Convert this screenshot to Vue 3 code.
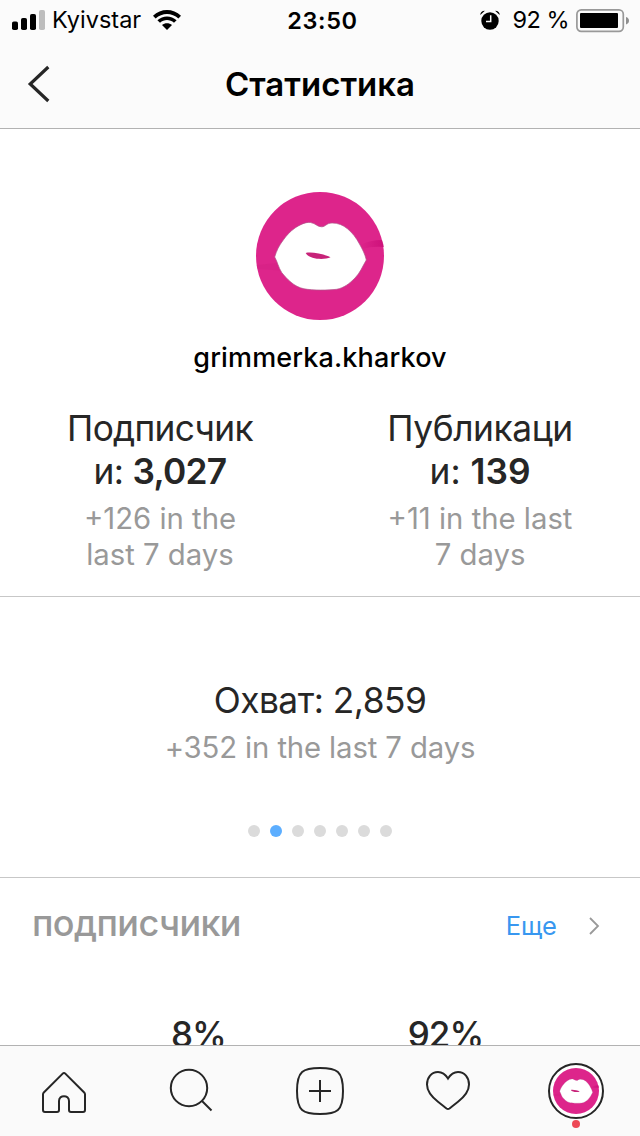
<template>
  <div class="screen">
    <header class="top">
      <div class="status-bar">
        <div class="status-left">
          <svg class="signal" width="34" height="20" viewBox="0 0 34 20">
            <rect x="0" y="11.5" width="6" height="8.5" rx="1.8" />
            <rect x="9" y="8" width="6" height="12" rx="1.8" />
            <rect x="18" y="4" width="6" height="16" rx="1.8" />
            <rect x="27" y="0" width="6" height="20" rx="1.8" fill="#bdbdbd" />
          </svg>
          <span class="carrier">Kyivstar</span>
          <svg class="wifi" width="28" height="20" viewBox="0 0 28 20">
            <path d="M0 5.7C7.8-1.9 20.2-1.9 28 5.7L25.4 8.4C19 2.4 9 2.4 2.6 8.4Z" />
            <path d="M4.4 10.2C9.8 5.1 18.2 5.1 23.6 10.2L21 12.8C17 9.2 11 9.2 7 12.8Z" />
            <path d="M9 15.1C11.8 12.5 16.2 12.5 19 15.1L14 20Z" />
          </svg>
        </div>
        <span class="clock">23:50</span>
        <div class="status-right">
          <svg class="alarm" width="20" height="20" viewBox="0 0 20 20">
            <circle cx="10" cy="11" r="8.7" />
            <path d="M0.3 4.9Q0.3 0.9 4.9 0.7ZM19.7 4.9Q19.7 0.9 15.1 0.7Z" />
            <path d="M10.7 5.2V11.6H6" fill="none" stroke="#fafafa" stroke-width="1.5" />
          </svg>
          <span class="charge">92 %</span>
          <svg class="battery" width="54" height="24" viewBox="0 0 54 24">
            <rect x="0.9" y="0.9" width="46.4" height="21.4" rx="4.3" fill="none" stroke="#999" stroke-width="1.7" />
            <rect x="4" y="4" width="38" height="15" rx="1" />
            <path d="M50 8Q53 9 53 11.7Q53 14.4 50 15.4Z" fill="#8f8f8f" />
          </svg>
        </div>
      </div>
      <div class="nav-bar">
        <svg class="back" width="24" height="38" viewBox="0 0 24 38">
          <path d="M21.3 2L3.2 19L21.3 36" fill="none" stroke="#262626" stroke-width="3.2" />
        </svg>
        <h1 class="title">Статистика</h1>
      </div>
    </header>

    <main class="content">
      <section class="profile">
        <svg class="avatar" viewBox="0 0 128 128">
          <defs>
            <linearGradient id="fold">
              <stop offset="0" stop-color="#c90c76" stop-opacity="0" />
              <stop offset="1" stop-color="#c90c76" stop-opacity=".8" />
            </linearGradient>
            <symbol id="lips" viewBox="0 0 128 128">
              <circle cx="64" cy="64" r="64" fill="#dd258b" />
              <path d="M104 53Q114 48 126 48Q127.500 52 127.800 55Q116 54 106 57Z" fill="url(#fold)" />
              <path d="M0.300 73L31 70L32 79L1.600 77Z" fill="#c81879" opacity=".2" />
              <path
                d="M18.700 65C20.500 59 23 53.500 27.300 48C30.500 43.500 34 39.500 39 36C44 32.500 50 29.800 54.500 30.500C60 31.500 61 34.800 65.700 34.800C69.500 34.800 70.500 31 76 31C82 31 87 33 91.500 36.800C96.500 41 100 45.500 103.500 52C106.500 57.500 109 62 110.300 68C106.500 74.500 104 81 99 86C93.500 91.500 88 96 80.500 97.300C72 98.300 57 98.500 48 96.800C38 94.800 31 87 25.700 80.500C22.500 75.500 21.500 70 18.700 65Z"
                fill="#fff" stroke="#b0558a" stroke-width=".7"
              />
              <path d="M49.700 61C55 59.500 68 62 74.500 65.300C67 68.500 53 67 49.700 61Z" fill="#c72379" />
            </symbol>
          </defs>
          <use href="#lips" />
        </svg>
        <div class="username">grimmerka.kharkov</div>
        <div class="stats">
          <div v-for="stat in stats" :key="stat.key" class="stat" :class="stat.key">
            <div class="stat-line stat-label">{{ stat.head }}</div>
            <div class="stat-line">{{ stat.tail }} <b>{{ stat.value }}</b></div>
            <div class="stat-change">
              <div v-for="line in stat.change" :key="line">{{ line }}</div>
            </div>
          </div>
        </div>
      </section>

      <section class="reach">
        <div class="reach-total">Охват: 2,859</div>
        <div class="reach-change">+352 in the last 7 days</div>
        <div class="dots">
          <span v-for="n in 7" :key="n" class="dot" :class="{ active: n === activeSlide }"></span>
        </div>
      </section>

      <section class="followers">
        <div class="section-head">
          <h2 class="section-title">подписчики</h2>
          <a class="more">
            <span>Еще</span>
            <svg width="12" height="20" viewBox="0 0 12 20">
              <path d="M2 2L10 10L2 18" fill="none" stroke="#999" stroke-width="1.8" />
            </svg>
          </a>
        </div>
        <div class="shares">
          <span v-for="share in shares" :key="share">{{ share }}%</span>
        </div>
      </section>
    </main>

    <nav class="tab-bar">
      <div class="tab">
        <svg width="48" height="48" viewBox="0 0 48 48">
          <path d="M24 6Q24.700 6 25.300 6.600L44.200 25.500Q45 26.300 45 27.500V43Q45 45 43 45H31Q29 45 29 43V34C29 27.500 19 27.500 19 34V43Q19 45 17 45H5Q3 45 3 43V27.500Q3 26.300 3.800 25.500L22.700 6.600Q23.300 6 24 6Z" />
        </svg>
      </div>
      <div class="tab">
        <svg width="48" height="48" viewBox="0 0 48 48">
          <circle cx="21" cy="21" r="18.200" />
          <path d="M34 34L43.500 43.500" />
        </svg>
      </div>
      <div class="tab">
        <svg width="48" height="48" viewBox="0 0 48 48">
          <path d="M24 1C41 1 47 4 47 24C47 44 41 47 24 47C7 47 1 44 1 24C1 4 7 1 24 1Z" />
          <path d="M24 13V35M13 24H35" />
        </svg>
      </div>
      <div class="tab">
        <svg width="48" height="48" viewBox="0 0 48 48">
          <path d="M24 11.500C21.500 7.500 18 5 14 5C7.500 5 3 10.500 3 17.500C3 25 8 30 14 34.800C18 38 20.500 40 22.500 41.500Q24 42.500 25.500 41.500C27.500 40 30 38 34 34.800C40 30 45 25 45 17.500C45 10.500 40.500 5 34 5C30 5 26.500 7.500 24 11.500Z" />
        </svg>
      </div>
      <div class="tab tab-profile">
        <span class="ring">
          <svg class="mini-avatar" viewBox="0 0 128 128"><use href="#lips" /></svg>
        </span>
        <span class="badge"></span>
      </div>
    </nav>
  </div>
</template>

<script setup>
import { ref } from 'vue'

const activeSlide = ref(2)

const stats = [
  { key: 'subscribers', head: 'Подписчик', tail: 'и:', value: '3,027', change: ['+126 in the', 'last 7 days'] },
  { key: 'posts', head: 'Публикаци', tail: 'и:', value: '139', change: ['+11 in the last', '7 days'] }
]

const shares = [8, 92]
</script>

<style>
body {
  margin: 0;
  background: #fff;
}
</style>

<style scoped>
.screen {
  display: flex;
  flex-direction: column;
  width: 640px;
  height: 1136px;
  overflow: hidden;
  background: #fff;
  color: #262626;
  font-family: Inter, Roboto, sans-serif;
}

svg {
  display: block;
  flex: none;
}

h1,
h2 {
  margin: 0;
}

.top {
  flex: none;
  height: 128px;
  background: #fbfbfb;
  border-bottom: 1px solid #b2b2b2;
}

.status-bar {
  display: grid;
  grid-template-columns: 1fr auto 1fr;
  height: 40px;
  padding: 0 10px 0 12px;
  line-height: 42px;
  font-size: 23.5px;
  color: #000;
}

.status-left,
.status-right {
  display: flex;
  align-items: center;
  height: 40px;
}

.status-right {
  justify-content: flex-end;
}

.carrier {
  margin: 0 12px 0 6px;
}

.clock {
  padding-left: 3px;
  font-weight: 600;
  letter-spacing: 0.6px;
}

.charge {
  margin: 0 7px 0 12px;
  letter-spacing: -0.5px;
}

.battery {
  margin-top: 1px;
}

.nav-bar {
  display: grid;
  grid-template-columns: 60px 1fr 60px;
  align-items: center;
  height: 88px;
}

.back {
  margin-left: 27px;
}

.title {
  font-size: 33px;
  line-height: 44px;
  font-weight: 600;
  text-align: center;
  color: #000;
}

.content {
  flex: 1;
  min-height: 0;
  overflow: hidden;
}

.profile {
  height: 467px;
  padding-top: 63px;
  box-sizing: border-box;
  text-align: center;
}

.avatar {
  width: 128px;
  height: 128px;
  margin: 0 auto;
}

.username {
  margin-top: 21px;
  font-size: 27px;
  line-height: 34px;
  font-weight: 500;
  letter-spacing: 0.15px;
  color: #000;
}

.stats {
  display: grid;
  grid-template-columns: 1fr 1fr;
  margin-top: 32px;
}

.stat-line {
  font-size: 35.3px;
  line-height: 43px;
  white-space: nowrap;
}

.stat-line b {
  font-weight: 600;
}

.subscribers .stat-line {
  letter-spacing: -0.7px;
}

.posts .stat-label {
  letter-spacing: -0.4px;
}

.stat-change,
.reach-change {
  font-size: 29.3px;
  line-height: 36px;
  color: #999;
}

.stat-change {
  margin-top: 8px;
}

.reach {
  height: 282px;
  padding-top: 82px;
  box-sizing: border-box;
  border-top: 1px solid #c7c7c7;
  border-bottom: 1px solid #c7c7c7;
  text-align: center;
}

.reach-total {
  font-size: 35.3px;
  line-height: 44px;
  letter-spacing: -0.5px;
}

.reach-change {
  margin-top: 7px;
  letter-spacing: -0.12px;
}

.dots {
  display: flex;
  justify-content: center;
  gap: 10px;
  margin-top: 59px;
}

.dot {
  width: 12px;
  height: 12px;
  border-radius: 50%;
  background: #dbdbdb;
}

.dot.active {
  background: #5caeff;
}

.section-head {
  display: flex;
  align-items: flex-start;
  justify-content: space-between;
  height: 44px;
  padding: 24px 40px 0 32px;
}

.section-title {
  font-size: 36px;
  line-height: 43px;
  font-weight: 500;
  letter-spacing: -0.6px;
  color: #999;
}

.more {
  display: flex;
  align-items: center;
  gap: 31px;
  font-size: 25.5px;
  line-height: 48px;
  color: #3897f0;
}

.shares {
  display: grid;
  grid-template-columns: 247px 247px;
  margin: 66px 0 0 75px;
  font-size: 35px;
  line-height: 44px;
  font-weight: 500;
  letter-spacing: -1px;
  text-align: center;
}

.tab-bar {
  display: grid;
  grid-template-columns: repeat(5, 1fr);
  flex: none;
  height: 90px;
  background: #fafafa;
  border-top: 1px solid #b2b2b2;
}

.tab {
  display: flex;
  align-items: center;
  justify-content: center;
}

.tab > svg {
  fill: none;
  stroke: #262626;
  stroke-width: 2;
}

.tab-profile {
  position: relative;
}

.ring {
  padding: 3px;
  border: 2px solid #262626;
  border-radius: 50%;
  background: #fff;
}

.mini-avatar {
  width: 46px;
  height: 46px;
}

.badge {
  position: absolute;
  left: 60px;
  bottom: 8px;
  width: 8px;
  height: 8px;
  border-radius: 50%;
  background: #ed4956;
}
</style>
